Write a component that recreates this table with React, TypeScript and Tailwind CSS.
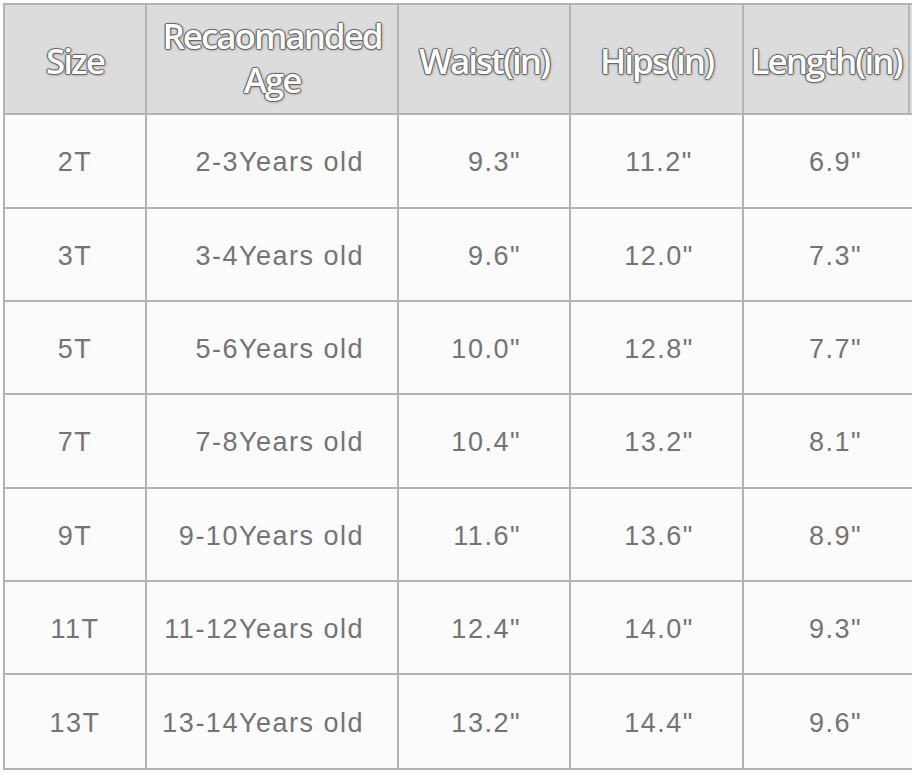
import React from "react";

const rows = [
  ["2T", "2-3Years old", '9.3"', '11.2"', '6.9"'],
  ["3T", "3-4Years old", '9.6"', '12.0"', '7.3"'],
  ["5T", "5-6Years old", '10.0"', '12.8"', '7.7"'],
  ["7T", "7-8Years old", '10.4"', '13.2"', '8.1"'],
  ["9T", "9-10Years old", '11.6"', '13.6"', '8.9"'],
  ["11T", "11-12Years old", '12.4"', '14.0"', '9.3"'],
  ["13T", "13-14Years old", '13.2"', '14.4"', '9.6"'],
];

const heights = ["h-[94px]", "h-[93px]", "h-[93px]", "h-[94px]", "h-[93px]", "h-[93px]", "h-[93px]"];

const headText =
  "text-white font-semibold text-[35px] leading-[44px] tracking-[-2px] [font-family:'Open_Sans',sans-serif] [text-shadow:0_0_1px_#444,1px_0_1px_#666,-1px_0_1px_#666,0_1px_1px_#666,0_-1px_1px_#666,1px_1px_3px_#999]";

export default function App() {
  return (
    <div className="w-[912px] h-[774px] bg-white overflow-hidden">
      <div className="ml-[3px] mt-[3px] w-[920px] border-t-2 border-l-2 border-b-2 border-[#b3b3b3] bg-[#fbfbfb]">
        <div className="grid grid-cols-[142px_252px_172px_173px_166px] h-[110px] border-b-2 border-[#b3b3b3] bg-[#dcdcdc]">
          <div className="border-r-2 border-[#b3b3b3] flex items-center justify-center pt-[4px]">
            <span className={headText}>Size</span>
          </div>
          <div className="border-r-2 border-[#b3b3b3] flex flex-col items-center justify-center pb-[2px]">
            <span className={headText}>Recaomanded</span>
            <span className={headText}>Age</span>
          </div>
          <div className="border-r-2 border-[#b3b3b3] flex items-center justify-center pt-[4px]">
            <span className={headText}>Waist(in)</span>
          </div>
          <div className="border-r-2 border-[#b3b3b3] flex items-center justify-center pt-[4px]">
            <span className={headText}>Hips(in)</span>
          </div>
          <div className="border-r-2 border-[#b3b3b3] flex items-center justify-center pt-[4px]">
            <span className={headText}>Length(in)</span>
          </div>
        </div>
        {rows.map((r, i) => (
          <div
            key={i}
            className={`grid grid-cols-[142px_252px_172px_173px_1fr] ${heights[i]} ${i < rows.length - 1 ? "border-b-2 border-[#b3b3b3]" : ""} text-[#747474] text-[27px] tracking-[1.5px] [font-family:'Liberation_Sans',Arial,sans-serif]`}
          >
            <div className="border-r-2 border-[#b3b3b3] flex items-center justify-center pt-[3px]">{r[0]}</div>
            <div className="border-r-2 border-[#b3b3b3] flex items-center justify-end pr-[33px] pt-[3px]">{r[1]}</div>
            <div className="border-r-2 border-[#b3b3b3] flex items-center justify-end pr-[48px] pt-[3px]">{r[2]}</div>
            <div className="border-r-2 border-[#b3b3b3] flex items-center justify-center pl-[5px] pt-[3px]">{r[3]}</div>
            <div className="flex items-center justify-start pl-[65px] pt-[3px]">{r[4]}</div>
          </div>
        ))}
      </div>
    </div>
  );
}
